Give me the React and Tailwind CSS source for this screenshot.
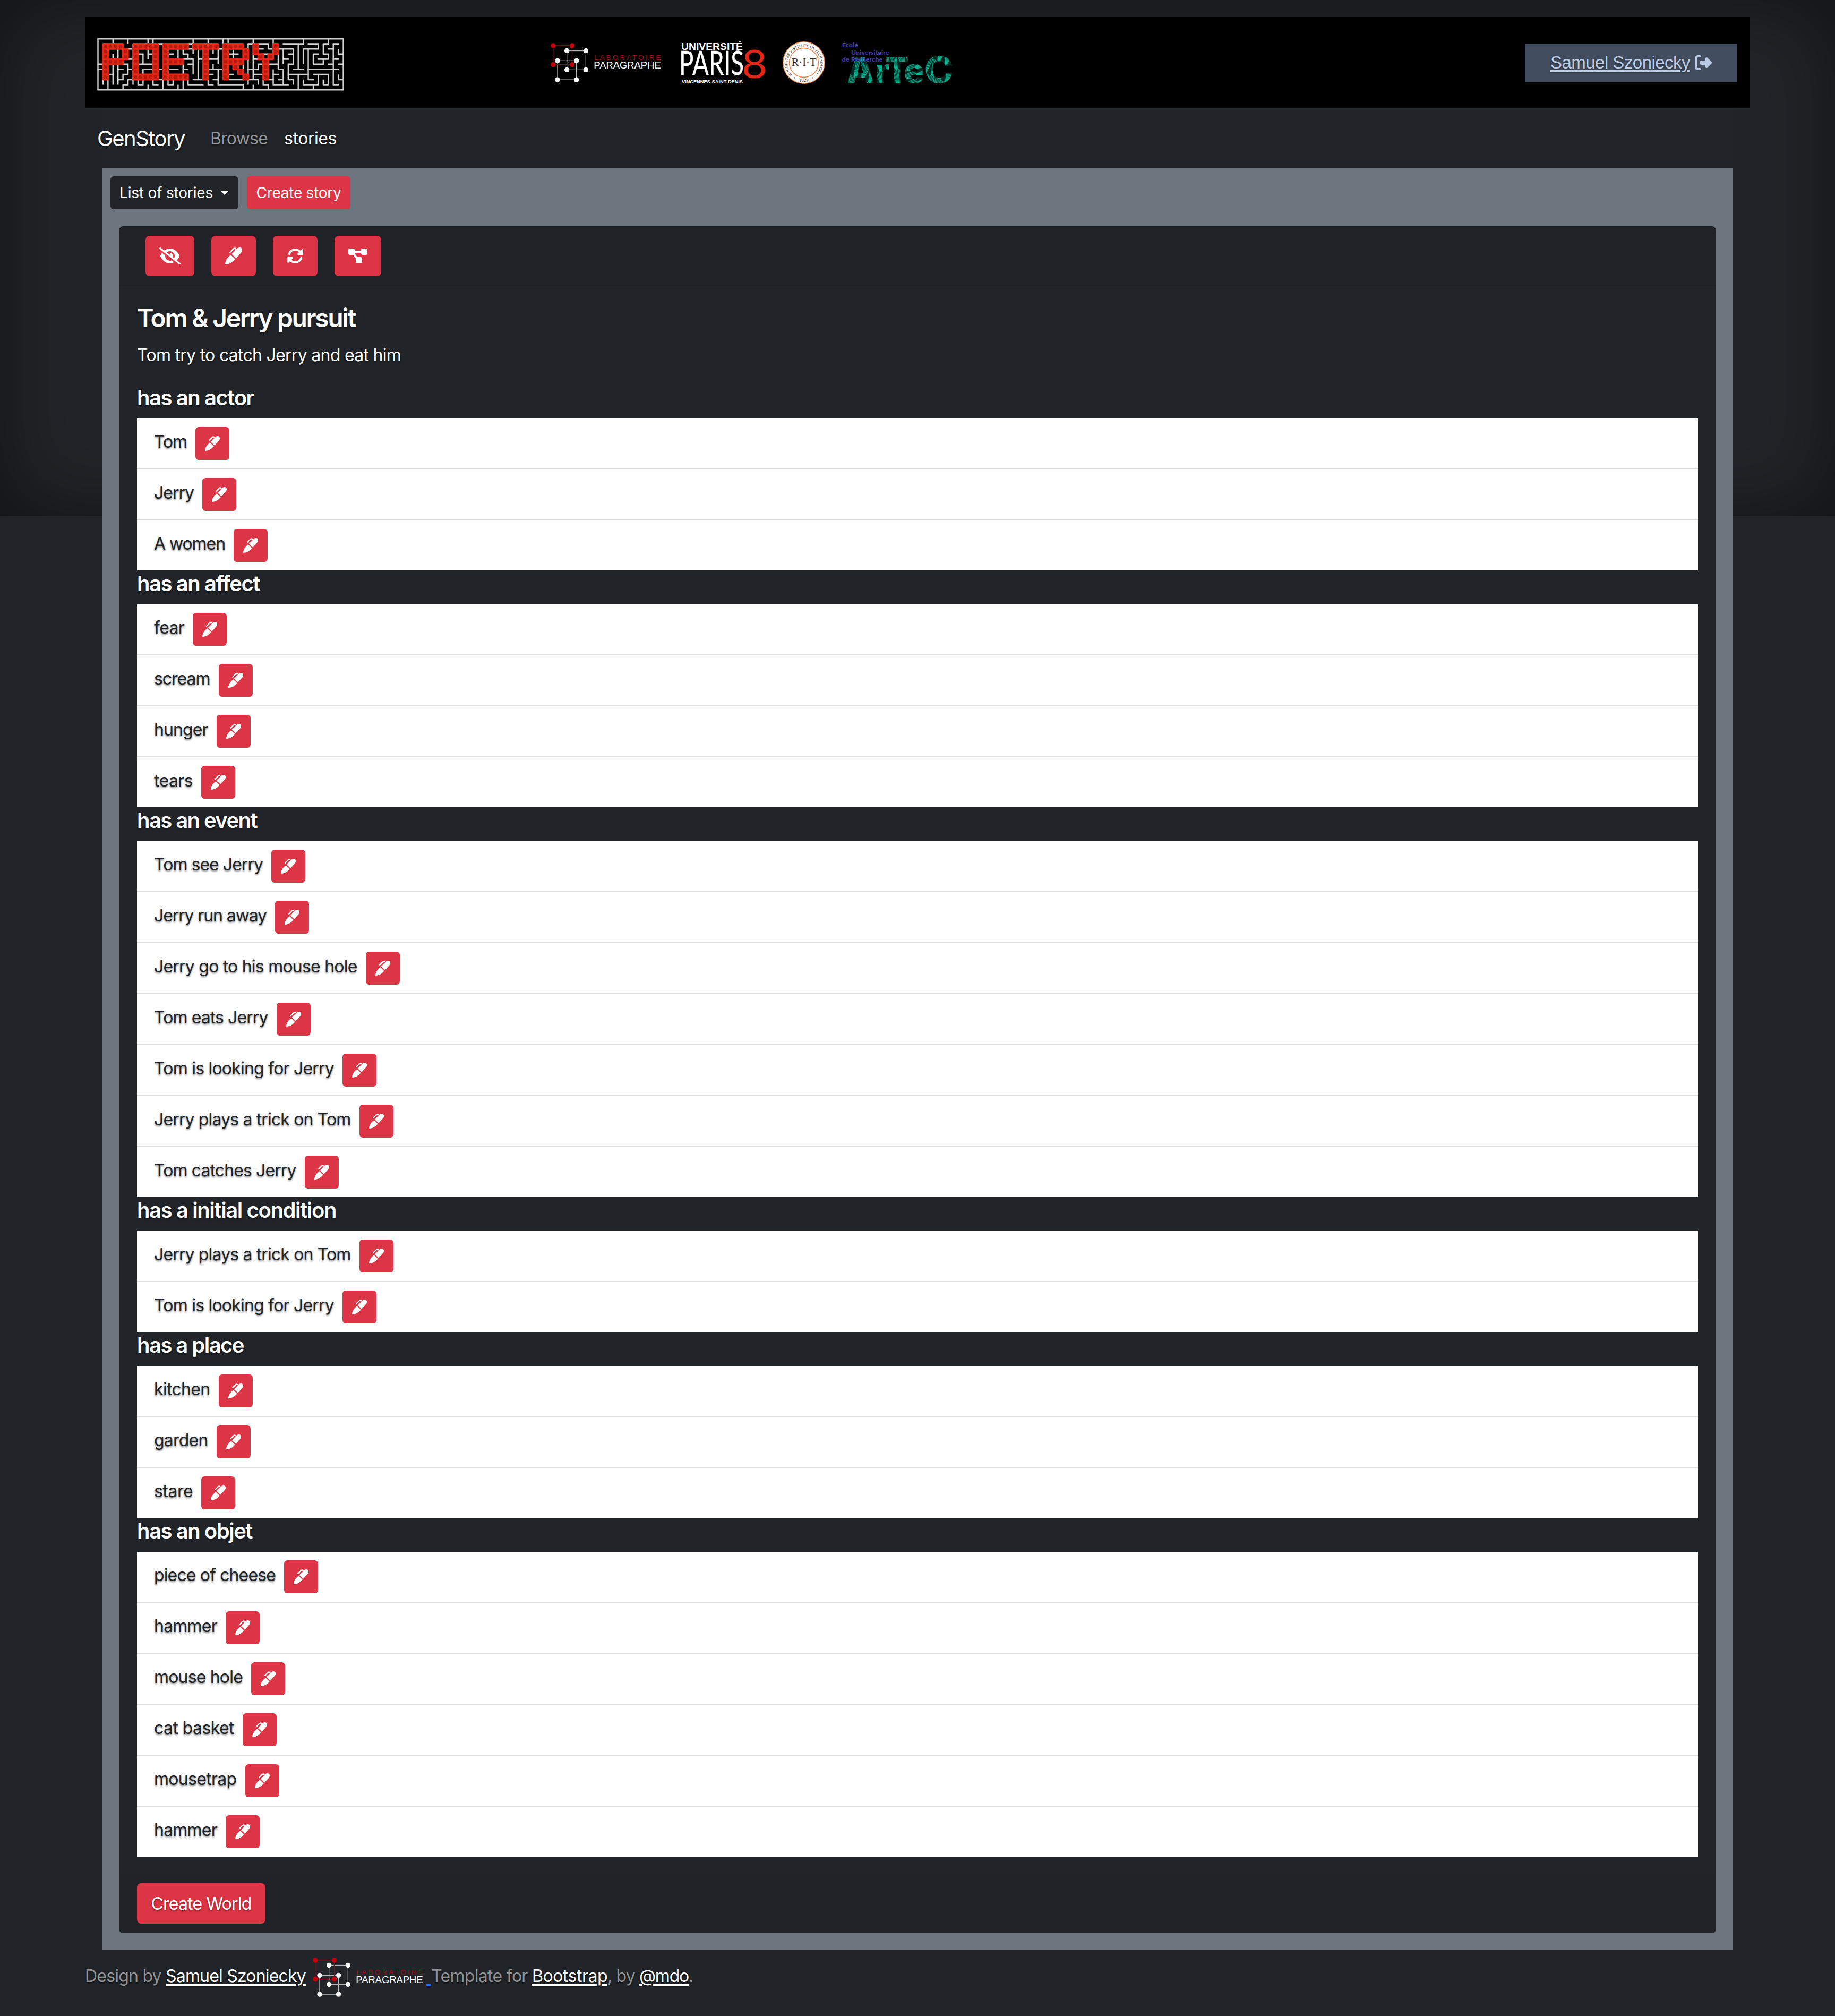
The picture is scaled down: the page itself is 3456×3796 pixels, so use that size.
import React, { useLayoutEffect, useRef, useState } from "react";
import { FaEyeSlash, FaRotate, FaDiagramProject, FaRightFromBracket } from "react-icons/fa6";

const shadow = "[text-shadow:0_1.6px_3.2px_rgba(0,0,0,0.5)]";

/* Text tracked so that its line is exactly w pixels wide */
function Fit({ w, className = "", children }) {
  const ref = useRef(null);
  const [tracking, setTracking] = useState(0);
  useLayoutEffect(() => {
    const natural = ref.current.getBoundingClientRect().width;
    setTracking((w - natural) / String(children).length);
  }, []);
  return (
    <span ref={ref} className={"shrink-0 whitespace-pre " + className} style={{ letterSpacing: `${tracking}px` }}>
      {children}
    </span>
  );
}

/* Maze walls: [line, from, to] in cell units on a 49 x 10 grid */
const hWalls = [
  [0, 0, 49], [10, 0, 49],
  [2, 6, 7], [4, 6, 7], [5, 0, 1], [6, 0, 1], [6, 4, 5], [5, 5, 6], [7, 5, 6], [8, 4, 5], [7, 2, 3], [6, 6, 7], [8, 6, 7], [9, 5, 6],
  [9, 8, 9], [9, 11, 12], [8, 12, 13], [9, 14, 15], [3, 8, 9], [5, 8, 11], [6, 9, 11], [3, 10, 11], [1, 12, 13], [6, 12, 13],
  [3, 14, 15], [6, 14, 16], [3, 17, 18], [4, 17, 19], [5, 18, 19], [6, 17, 18], [1, 18, 19], [2, 18, 19], [4, 20, 21], [4, 22, 24],
  [2, 24, 25], [8, 19, 21], [9, 18, 21], [9, 22, 23], [6, 22, 25], [9, 24, 29], [7, 22, 23], [8, 23, 24], [7, 26, 27], [8, 26, 29],
  [3, 26, 28], [1, 30, 31], [4, 31, 32], [6, 30, 32], [5, 32, 33], [7, 31, 33], [8, 30, 32], [1, 32, 34],
  [2, 34, 35], [2, 32, 33], [3, 33, 34], [1, 37, 41], [2, 36, 39], [4, 37, 38], [3, 38, 39], [5, 38, 39], [8, 38, 39], [5, 34, 36],
  [6, 36, 37], [9, 35, 38], [7, 35, 36], [8, 36, 37], [8, 34, 35], [9, 33, 34], [6, 39, 41], [7, 38, 42], [2, 41, 44], [1, 42, 44],
  [8, 42, 43], [6, 42, 48], [3, 43, 44], [5, 43, 45], [4, 44, 46], [3, 45, 46], [1, 45, 46], [2, 46, 47], [1, 47, 48], [4, 47, 48],
  [5, 46, 47], [5, 48, 49], [3, 48, 49], [9, 47, 48], [8, 48, 49], [7, 43, 46], [9, 41, 44], [9, 45, 46],
];
const vWalls = [
  [0, 0, 10], [49, 0, 10],
  [3, 0, 1], [6, 0, 1], [10, 0, 1], [11, 0, 1], [3, 3, 9], [4, 2, 9], [6, 5, 7], [5, 7, 8], [6, 8, 9], [5, 9, 10], [1, 8, 9], [2, 8, 10],
  [7, 8, 9], [8, 8, 9], [9, 8, 9], [11, 8, 9], [10, 9, 10], [13, 8, 10], [14, 8, 9], [15, 8, 9], [16, 9, 10], [9, 3, 5], [9, 6, 7],
  [10, 2, 4], [16, 2, 4], [17, 2, 3], [18, 3, 4], [19, 4, 7], [17, 5, 7], [19, 0, 1], [22, 0, 1], [19, 2, 3], [20, 2, 8], [23, 2, 3],
  [24, 2, 5], [25, 0, 1], [26, 0, 1], [18, 8, 9], [17, 8, 10], [22, 8, 9], [23, 5, 6], [24, 6, 9], [29, 9, 10], [27, 2, 4], [29, 5, 6],
  [30, 1, 2], [30, 4, 7], [30, 8, 9], [31, 0, 1], [31, 3, 8], [32, 5, 6], [32, 8, 9], [31, 9, 10],
  [34, 1, 2], [35, 0, 1], [41, 0, 1], [40, 1, 6], [37, 2, 5], [39, 2, 5], [38, 5, 8], [39, 8, 9], [36, 3, 6], [37, 6, 9], [35, 6, 9],
  [33, 8, 9], [34, 9, 10], [40, 7, 10], [42, 2, 8], [41, 2, 5], [44, 1, 2], [43, 3, 5], [45, 4, 5], [46, 3, 4], [45, 1, 3], [46, 0, 1],
  [47, 1, 9], [48, 2, 3], [48, 7, 8], [44, 7, 9], [41, 8, 9], [43, 9, 10], [46, 7, 9], [45, 8, 9],
];
/* Filled cells, one entry per maze row */
const cells = [
  [1, [1, 2, 3, 4, 7, 8, 9, 10, 11, 13, 14, 15, 16, 17, 19, 20, 21, 22, 23, 25, 26, 27, 28, 31, 35]],
  [2, [1, 5, 7, 11, 13, 21, 25, 29, 31, 35]],
  [3, [1, 5, 7, 11, 13, 21, 25, 29, 32, 34]],
  [4, [1, 2, 3, 4, 7, 11, 13, 14, 15, 16, 21, 25, 26, 27, 28, 33]],
  [5, [1, 7, 11, 13, 21, 25, 27, 33]],
  [6, [1, 7, 11, 13, 21, 25, 28, 33]],
  [7, [1, 7, 8, 9, 10, 11, 13, 14, 15, 16, 17, 21, 25, 29, 33]],
];
const CX = 9.43;
const CY = 9.6;

function MazeLogo() {
  const h = hWalls.map(([y, a, b]) => `M${a * CX - 1} ${y * CY}H${b * CX + 1}`).join("");
  const v = vWalls.map(([x, a, b]) => `M${x * CX} ${a * CY}V${b * CY}`).join("");
  return (
    <svg className="mt-[6px] block h-[100px] w-[466px] shrink-0" viewBox="-2.500 -2 466 100">
      <path d={h} stroke="#cfcfcf" strokeWidth="2.8" fill="none" />
      <path d={v} stroke="#d6d6d6" strokeWidth="2.4" fill="none" />
      {cells.map(([r, cols]) =>
        cols.map((c) => (
          <rect key={`${r}-${c}`} x={c * CX} y={r * CY} width={CX} height={CY} rx="1" fill="#b51c0e" stroke="#e42618" strokeWidth="3.2" />
        ))
      )}
    </svg>
  );
}

function Square({ x, y, dot, line }) {
  return (
    <g fill={dot}>
      <rect x={x} y={y} width="107" height="107.5" fill="none" stroke={line} strokeWidth="4" />
      <circle cx={x} cy={y} r="14" />
      <circle cx={x + 107} cy={y} r="14" />
      <circle cx={x} cy={y + 107.5} r="14" />
      <circle cx={x + 107} cy={y + 107.5} r="14" />
    </g>
  );
}

function ParagrapheLogo({ className }) {
  return (
    <svg className={"h-[75px] w-[208px] shrink-0 overflow-visible [text-shadow:none] " + className} viewBox="111 92 624 225">
      <Square x={203} y={135.5} dot="#fff" line="#b5b5b5" />
      <Square x={150} y={192} dot="#fff" line="#b5b5b5" />
      <Square x={125.5} y={106.5} dot="#c4000c" line="#8a0a10" />
      <text x="357" y="189" fontSize="41" fill="#a00c14" textLength="376" fontFamily="Liberation Sans" letterSpacing="0" lengthAdjust="spacing">LABORATOIRE</text>
      <text x="355" y="236" fontSize="56" fill="#fff" textLength="379" fontFamily="Liberation Sans" letterSpacing="0" lengthAdjust="spacingAndGlyphs">PARAGRAPHE</text>
    </svg>
  );
}

function Paris8Logo() {
  return (
    <svg className="h-[80px] w-[160px] overflow-visible" viewBox="1283 78 160 80">
      <g fill="#fff" fontFamily="Liberation Sans" fontWeight="700">
        <text x="1283" y="94" fontSize="19" textLength="116" lengthAdjust="spacingAndGlyphs">UNIVERSITÉ</text>
        <text x="1284" y="157.4" fontSize="9.4" textLength="115" lengthAdjust="spacingAndGlyphs">VINCENNES-SAINT-DENIS</text>
      </g>
      <text x="1279" y="141" fontSize="61" fill="#fff" stroke="#fff" strokeWidth="0.3" fontFamily="Lato" textLength="122" lengthAdjust="spacingAndGlyphs">PARIS</text>
      <text x="1397" y="147" fontSize="73" fill="#e42518" fontFamily="Lato" textLength="48" lengthAdjust="spacingAndGlyphs">8</text>
    </svg>
  );
}

function RitLogo() {
  return (
    <svg className="h-[82px] w-[82px]" viewBox="-41 -41 82 82">
      <defs>
        <path id="rit-arc" d="M-22.5 22.5A31 31 0 1 1 22.5 22.5" />
      </defs>
      <circle r="39.3" fill="#fff" stroke="#ee7b3e" strokeWidth="1.4" />
      <circle r="27.5" fill="none" stroke="#ee7b3e" strokeWidth="1.4" />
      <g fill="#4a2b22" fontFamily="Liberation Serif">
        <text fontSize="7.2">
          <textPath href="#rit-arc" textLength="143" lengthAdjust="spacing">ROCHESTER INSTITUTE OF TECHNOLOGY</textPath>
        </text>
        <text x="-23.5" y="6" fontSize="22" textLength="47" lengthAdjust="spacingAndGlyphs">R·I·T</text>
        <text x="-8.5" y="35.5" fontSize="8" textLength="17">1829</text>
      </g>
      <circle cx="-17.5" cy="28.5" r="1" fill="#4a2b22" />
      <circle cx="17" cy="28.5" r="1" fill="#4a2b22" />
    </svg>
  );
}

function ArtecLogo() {
  const letters = [
    ["A", 582, 161, 320, 205, "hatch-a"],
    ["r", 743, 84, 320, 195, "hatch-b"],
    ["T", 802, 134, 320, 208, "hatch-b"],
    ["e", 907, 116, 319, 195, "hatch-c"],
    ["C", 1023, 164, 319, 205, "hatch-a"],
  ];
  /* Hatching whose lines fan together at one end of each tile */
  const hatches = [
    ["hatch-a", 24],
    ["hatch-b", -8],
    ["hatch-c", 78],
  ];
  return (
    <svg className="h-[80px] w-[208px] overflow-visible" viewBox="556 84 624 240">
      <defs>
        {hatches.map(([id, angle]) => (
          <pattern key={id} id={id} width="44" height="90" patternUnits="userSpaceOnUse" patternTransform={`rotate(${angle})`}>
            <rect width="44" height="90" fill="#002a22" />
            <path d="M2 0L26 90M12 0L29 90M22 0L32 90M32 0L35 90M42 0L38 90" fill="none" stroke="#08b593" strokeWidth="4" />
          </pattern>
        ))}
      </defs>
      <g fontFamily="Inter" fontWeight="800">
        {letters.map(([c, x, w, y, s, id]) => (
          <text key={c} x={x} y={y} fontSize={s} fill={`url(#${id})`} textLength={w} lengthAdjust="spacingAndGlyphs">{c}</text>
        ))}
      </g>
      <g fill="#3f3ba6" fontFamily="Lato" fontWeight="900" fontSize="36">
        <text x="558" y="117" textLength="91" lengthAdjust="spacingAndGlyphs">École</text>
        <text x="610" y="159" textLength="214" lengthAdjust="spacingAndGlyphs">Universitaire</text>
        <text x="558" y="198" textLength="230" lengthAdjust="spacingAndGlyphs">de Recherche</text>
      </g>
    </svg>
  );
}

function PenIcon({ className }) {
  return (
    <svg className={className} viewBox="0 0 32 32" fill="currentColor">
      <path d="M12.2 12.3L21.4 3C24.6-.6 28.9-.5 30.8 1.5C32.7 3.5 32.6 7 29.9 10.1L20.6 20.4z" />
      <path d="M10.6 13.9L19 21.9C14 27.6 7.8 31.6.7 32Q0 32 0 31.3C.5 24.8 4 19 10.6 13.9z" />
      <path d="M9.3 9.2L15.7 2.6Q17.9.6 20 2.5" fill="none" stroke="currentColor" strokeWidth="2.5" strokeLinecap="round" />
    </svg>
  );
}

/* [heading, heading width, [label, label width][]] */
const sections = [
  ["has an actor", 220, [["Tom", 62], ["Jerry", 75], ["A women", 134]]],
  ["has an affect", 231, [["fear", 57], ["scream", 105.5], ["hunger", 101.5], ["tears", 73]]],
  ["has an event", 226, [["Tom see Jerry", 205], ["Jerry run away", 212], ["Jerry go to his mouse hole", 382.5], ["Tom eats Jerry", 214.5], ["Tom is looking for Jerry", 339], ["Jerry plays a trick on Tom", 370.5], ["Tom catches Jerry", 267.5]]],
  ["has a initial condition", 375, [["Jerry plays a trick on Tom", 370.5], ["Tom is looking for Jerry", 339]]],
  ["has a place", 201, [["kitchen", 105.5], ["garden", 101.5], ["stare", 73]]],
  ["has an objet", 217, [["piece of cheese", 229], ["hammer", 119], ["mouse hole", 167], ["cat basket", 151], ["mousetrap", 155.5], ["hammer", 119]]],
];

function Section({ title, width, items }) {
  return (
    <section>
      <h5 className={"mb-[15px] h-[49px] pt-px text-[40px] leading-[48px] font-[580] " + shadow}>
        <Fit w={width}>{title}</Fit>
      </h5>
      <ul className="bg-white text-[#212529]">
        {items.map(([item, w], i) => (
          <li key={i} className="flex h-[96px] items-start border-b-2 border-[#dfdfdf] px-8 pt-4 last:h-[94px] last:border-b-0">
            <Fit w={w} className={"mr-4 pt-[4px] leading-[48px] " + shadow}>{item}</Fit>
            <button className="flex h-[62px] w-[64px] items-center justify-center rounded-[6.4px] bg-[#dc3545] text-white">
              <PenIcon className="size-[28px]" />
            </button>
          </li>
        ))}
      </ul>
    </section>
  );
}

function ToolButton({ icon: Icon, className, iconClass }) {
  return (
    <button className={"flex h-[76px] items-center justify-center rounded-[8px] bg-[#dc3545] text-white " + className}>
      <Icon className={"h-8 " + iconClass} />
    </button>
  );
}

const link = "text-white underline decoration-[3px] underline-offset-[4px]";

export default function App() {
  return (
    <div className="relative h-[3796px] w-[3456px] overflow-hidden bg-[#212529] font-['Inter',sans-serif] text-[32px] font-[430] text-white">
      <div className="pointer-events-none absolute inset-x-0 top-0 h-[972px] shadow-[inset_0_0_160px_rgba(0,0,0,0.5)]" />
      <div className="relative flex h-full flex-col px-[160px] pt-[32px]">
        <header className="flex h-[172px] items-center bg-black pr-6 pl-[22px]">
          <MazeLogo />
          <ParagrapheLogo className="ml-[389px]" />
          <div className="ml-[38px]"><Paris8Logo /></div>
          <div className="ml-[30px]"><RitLogo /></div>
          <div className="ml-[30px]"><ArtecLogo /></div>
          <div className="ml-auto flex h-[72px] w-[400px] items-center bg-[#424e5f] pl-[48px] font-['Liberation_Sans',sans-serif] text-[#bccce6]">
            <Fit w={263} className={"text-[33px] underline decoration-[3px] underline-offset-[3px] " + shadow}>Samuel Szoniecky</Fit>
            <FaRightFromBracket className="ml-[9px] size-[32px]" />
          </div>
        </header>

        <nav className={"flex h-[112px] items-center pt-[2px] pl-[23px] " + shadow}>
          <Fit w={165} className="text-[40px]">GenStory</Fit>
          <Fit w={108} className="ml-[48px] text-[#949698]">Browse</Fit>
          <Fit w={99} className="ml-[31px]">stories</Fit>
        </nav>

        <main className="mx-8 flex h-[3356px] flex-col bg-[#6c757d] p-4 pb-8">
          <div className="flex gap-4 text-[28px]">
            <button className="flex h-[62px] w-[241px] items-center rounded-[6.4px] bg-[#212529] pl-[17px]">
              <Fit w={176}>List of stories</Fit>
              <span className="ml-[14px] border-x-[8.4px] border-t-[8.4px] border-x-transparent border-t-white" />
            </button>
            <button className="flex h-[62px] w-[195px] items-center justify-center rounded-[6.4px] bg-[#dc3545]">
              <Fit w={160}>Create story</Fit>
            </button>
          </div>

          <div className="mx-4 mt-8 flex grow flex-col rounded-[8px] border-2 border-[#1e2226] bg-[#212529]">
            <div className="flex h-[110px] items-start border-b-2 border-[#1e2226] bg-black/[0.03] pt-4 pl-12">
              <ToolButton icon={FaEyeSlash} className="w-[92px]" iconClass="w-10" />
              <ToolButton icon={PenIcon} className="ml-8 w-[84px]" iconClass="w-8" />
              <ToolButton icon={FaRotate} className="ml-8 w-[84px]" iconClass="w-8" />
              <ToolButton icon={FaDiagramProject} className="ml-8 w-[88px]" iconClass="w-9" />
            </div>
            <div className="flex flex-col px-8 pt-8 pb-8">
              <h4 className={"mb-4 h-[58px] text-[48px] leading-[58px] font-[580] " + shadow}>
                <Fit w={411}>Tom &amp; Jerry pursuit</Fit>
              </h4>
              <p className={"mb-[31px] h-[49px] pt-px leading-[48px] " + shadow}>
                <Fit w={497}>Tom try to catch Jerry and eat him</Fit>
              </p>
              {sections.map(([title, width, items]) => (
                <Section key={title} title={title} width={width} items={items} />
              ))}
            </div>
            <div className="flex grow items-start border-t-2 border-[#1e2226] bg-black/[0.03] px-8 pt-4">
              <button className={"flex h-[76px] w-[242px] items-center justify-center rounded-[8px] bg-[#dc3545] pt-[2px] " + shadow}>
                <Fit w={189}>Create World</Fit>
              </button>
            </div>
          </div>
        </main>

        <footer className={"mt-[14px] flex h-[75px] items-center text-[#8f9193] " + shadow}>
          <div className="flex -translate-y-[3px]">
            <Fit w={152}>{"Design by "}</Fit>
            <Fit w={264} className={link}>Samuel Szoniecky</Fit>
          </div>
          <ParagrapheLogo className="ml-[13px]" />
          <div className="ml-[6px] flex -translate-y-[3px]">
            <Fit w={9} className="text-[#0d6efd] underline decoration-[3px] underline-offset-[4px]">{" "}</Fit>
            <Fit w={190}>{"Template for "}</Fit>
            <Fit w={142} className={link}>Bootstrap</Fit>
            <Fit w={60}>{", by "}</Fit>
            <Fit w={93} className={link}>@mdo</Fit>
            <span>.</span>
          </div>
        </footer>
      </div>
    </div>
  );
}
